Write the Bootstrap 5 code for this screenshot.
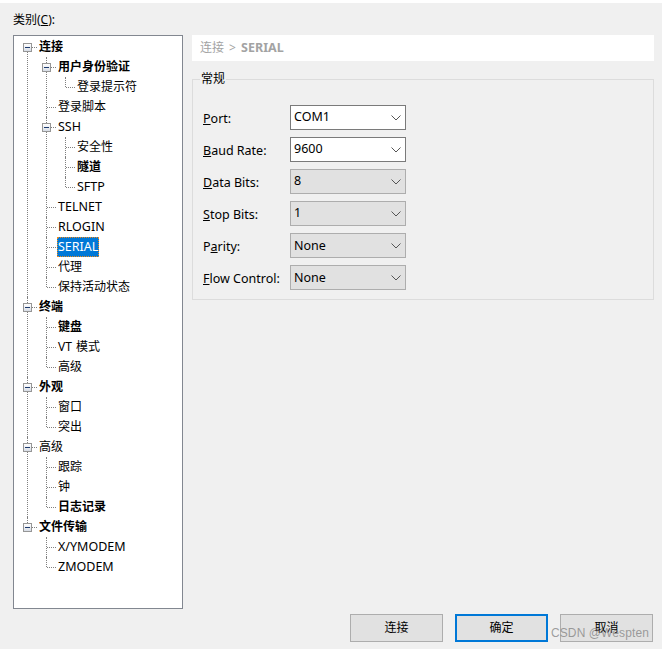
<!DOCTYPE html>
<html lang="zh">
<head>
  <meta charset="UTF-8">
  <meta name="viewport" content="width=device-width, initial-scale=1.0">
  <title>Session Options</title>
  <link href="https://cdn.jsdelivr.net/npm/bootstrap@5.3.0/dist/css/bootstrap.min.css" rel="stylesheet">
  <style>
    html, body { height: 100%; }
    body {
      position: relative;
      width: 662px;
      height: 649px;
      overflow: hidden;
      background: #f0f0f0;
      border-top: 3px solid #fff;
      color: #000;
      font: 12.5px/20px "Noto Sans", "Noto Sans CJK SC", sans-serif;
    }
    .dlg-title { padding: 7px 0 5px 13px; height: 32px; font-size: 12px; }
    .dlg-main { padding: 0 8px 0 13px; gap: 9px; }

    /* category tree */
    .cat-tree {
      width: 170px;
      height: 574px;
      flex: none;
      background: #fff;
      border: 1px solid #828790;
      padding-top: 1px;
    }
    .cat-tree ul { list-style: none; margin: 0; padding: 0; }
    .cat-tree ul ul { margin-left: 19px; }
    .tree-node { position: relative; }
    .tree-node::before {
      content: '';
      position: absolute;
      left: 13px;
      top: 0;
      bottom: 0;
      border-left: 1px dotted #808080;
    }
    .tree-node:last-child::before { bottom: auto; height: 10px; }
    .cat-tree > ul > .tree-node:first-child::before { top: 10px; height: auto; bottom: 0; }
    .tree-row {
      position: relative;
      height: 20px;
      padding-left: 25px;
      display: flex;
      align-items: center;
      white-space: nowrap;
    }
    .tree-row::before {
      content: '';
      position: absolute;
      left: 14px;
      top: 10px;
      width: 9px;
      border-top: 1px dotted #808080;
    }
    .tree-box {
      position: absolute;
      left: 9px;
      top: 6px;
      width: 9px;
      height: 9px;
      z-index: 1;
      border: 1px solid #969696;
      background: linear-gradient(#fff, #d8dde6);
    }
    .tree-box::after {
      content: '';
      position: absolute;
      left: 1px;
      top: 3px;
      width: 5px;
      height: 1px;
      background: #1c3a6e;
    }
    .tree-label { font-size: 12px; word-spacing: 1px; }
    .tree-label.is-latin { font-size: 12.5px; word-spacing: 0; }
    .tree-label.on-bold { font-weight: 700; }
    .tree-label.picked {
      background: #0078d7;
      color: #fff;
      margin-left: -1px;
      padding: 0 1px;
      height: 20px;
      outline: 1px dotted #f08a1d;
      outline-offset: -1px;
    }

    /* right side */
    .opt-pane { width: 462px; flex: none; }
    .crumb {
      height: 26px;
      line-height: 25px;
      background: #fff;
      color: #a3a3a3;
      font-size: 12px;
      padding-left: 8px;
      word-spacing: 2px;
    }
    .crumb b { font-weight: 700; font-size: 12.5px; }
    .opt-group {
      position: relative;
      height: 221px;
      margin-top: 18px;
      border: 1px solid #dcdcdc;
      padding: 25px 0 0 10px;
    }
    .opt-legend {
      position: absolute;
      left: 7px;
      top: -11px;
      padding: 0 1px;
      background: #f0f0f0;
      font-size: 12px;
    }
    .opt-rows { gap: 7px; }
    .opt-label { width: 87px; flex: none; padding-top: 2px; }
    .opt-select.form-select {
      width: 116px;
      height: 25px;
      padding: 0 24px 2px 3px;
      border-radius: 0;
      border: 1px solid #7a7a7a;
      color: #000;
      font: inherit;
      line-height: 20px;
      background-color: #fff;
      background-image: url("data:image/svg+xml,%3csvg xmlns='http://www.w3.org/2000/svg' viewBox='0 0 10 6'%3e%3cpath fill='none' stroke='%23555' d='M.5.5 5 5 9.5.5'/%3e%3c/svg%3e");
      background-size: 10px 6px;
      background-position: right 4px center;
    }
    .opt-select.form-select.is-flat {
      background-color: #e1e1e1;
      border-color: #adadad;
    }
    .opt-select.form-select.is-none { padding-bottom: 0; }

    /* bottom buttons */
    .dlg-btns {
      position: absolute;
      left: 350px;
      top: 611px;
      gap: 12px;
    }
    .dlg-btn.btn {
      width: 93px;
      height: 28px;
      padding: 0;
      border-radius: 0;
      background: #e1e1e1;
      border: 1px solid #adadad;
      color: #000;
      font: inherit;
      font-size: 12px;
      line-height: 24px;
    }
    .dlg-btn.btn.is-default { border: 2px solid #0078d7; }
    .water-mark {
      position: absolute;
      left: 551px;
      top: 620px;
      color: rgba(120, 120, 120, .7);
      font: 12px/20px "Liberation Sans", sans-serif;
      letter-spacing: .1px;
    }
  </style>
</head>
<body>

<div class="dlg-title">类别(<u>C</u>):</div>

<div class="dlg-main d-flex">
  <div class="cat-tree">
    <ul>
      <li class="tree-node">
        <div class="tree-row"><i class="tree-box"></i><span class="tree-label on-bold">连接</span></div>
        <ul>
          <li class="tree-node">
            <div class="tree-row"><i class="tree-box"></i><span class="tree-label on-bold">用户身份验证</span></div>
            <ul>
              <li class="tree-node"><div class="tree-row"><span class="tree-label">登录提示符</span></div></li>
            </ul>
          </li>
          <li class="tree-node"><div class="tree-row"><span class="tree-label">登录脚本</span></div></li>
          <li class="tree-node">
            <div class="tree-row"><i class="tree-box"></i><span class="tree-label is-latin">SSH</span></div>
            <ul>
              <li class="tree-node"><div class="tree-row"><span class="tree-label">安全性</span></div></li>
              <li class="tree-node"><div class="tree-row"><span class="tree-label on-bold">隧道</span></div></li>
              <li class="tree-node"><div class="tree-row"><span class="tree-label is-latin">SFTP</span></div></li>
            </ul>
          </li>
          <li class="tree-node"><div class="tree-row"><span class="tree-label is-latin">TELNET</span></div></li>
          <li class="tree-node"><div class="tree-row"><span class="tree-label is-latin">RLOGIN</span></div></li>
          <li class="tree-node"><div class="tree-row"><span class="tree-label is-latin picked">SERIAL</span></div></li>
          <li class="tree-node"><div class="tree-row"><span class="tree-label">代理</span></div></li>
          <li class="tree-node"><div class="tree-row"><span class="tree-label">保持活动状态</span></div></li>
        </ul>
      </li>
      <li class="tree-node">
        <div class="tree-row"><i class="tree-box"></i><span class="tree-label on-bold">终端</span></div>
        <ul>
          <li class="tree-node"><div class="tree-row"><span class="tree-label on-bold">键盘</span></div></li>
          <li class="tree-node"><div class="tree-row"><span class="tree-label">VT 模式</span></div></li>
          <li class="tree-node"><div class="tree-row"><span class="tree-label">高级</span></div></li>
        </ul>
      </li>
      <li class="tree-node">
        <div class="tree-row"><i class="tree-box"></i><span class="tree-label on-bold">外观</span></div>
        <ul>
          <li class="tree-node"><div class="tree-row"><span class="tree-label">窗口</span></div></li>
          <li class="tree-node"><div class="tree-row"><span class="tree-label">突出</span></div></li>
        </ul>
      </li>
      <li class="tree-node">
        <div class="tree-row"><i class="tree-box"></i><span class="tree-label">高级</span></div>
        <ul>
          <li class="tree-node"><div class="tree-row"><span class="tree-label">跟踪</span></div></li>
          <li class="tree-node"><div class="tree-row"><span class="tree-label">钟</span></div></li>
          <li class="tree-node"><div class="tree-row"><span class="tree-label on-bold">日志记录</span></div></li>
        </ul>
      </li>
      <li class="tree-node">
        <div class="tree-row"><i class="tree-box"></i><span class="tree-label on-bold">文件传输</span></div>
        <ul>
          <li class="tree-node"><div class="tree-row"><span class="tree-label is-latin">X/YMODEM</span></div></li>
          <li class="tree-node"><div class="tree-row"><span class="tree-label is-latin">ZMODEM</span></div></li>
        </ul>
      </li>
    </ul>
  </div>

  <div class="opt-pane">
    <div class="crumb">连接 &gt; <b>SERIAL</b></div>
    <div class="opt-group">
      <span class="opt-legend">常规</span>
      <div class="opt-rows d-flex flex-column">
        <div class="d-flex align-items-center">
          <label class="opt-label"><u>P</u>ort:</label>
          <select class="opt-select form-select"><option>COM1</option></select>
        </div>
        <div class="d-flex align-items-center">
          <label class="opt-label"><u>B</u>aud Rate:</label>
          <select class="opt-select form-select"><option>9600</option></select>
        </div>
        <div class="d-flex align-items-center">
          <label class="opt-label"><u>D</u>ata Bits:</label>
          <select class="opt-select form-select is-flat"><option>8</option></select>
        </div>
        <div class="d-flex align-items-center">
          <label class="opt-label"><u>S</u>top Bits:</label>
          <select class="opt-select form-select is-flat"><option>1</option></select>
        </div>
        <div class="d-flex align-items-center">
          <label class="opt-label">P<u>a</u>rity:</label>
          <select class="opt-select form-select is-flat is-none"><option>None</option></select>
        </div>
        <div class="d-flex align-items-center">
          <label class="opt-label"><u>F</u>low Control:</label>
          <select class="opt-select form-select is-flat is-none"><option>None</option></select>
        </div>
      </div>
    </div>
  </div>
</div>

<div class="dlg-btns d-flex">
  <button type="button" class="dlg-btn btn">连接</button>
  <button type="button" class="dlg-btn btn is-default">确定</button>
  <button type="button" class="dlg-btn btn">取消</button>
</div>

<div class="water-mark">CSDN @Wespten</div>

<script src="https://cdn.jsdelivr.net/npm/bootstrap@5.3.0/dist/js/bootstrap.bundle.min.js"></script>
</body>
</html>
